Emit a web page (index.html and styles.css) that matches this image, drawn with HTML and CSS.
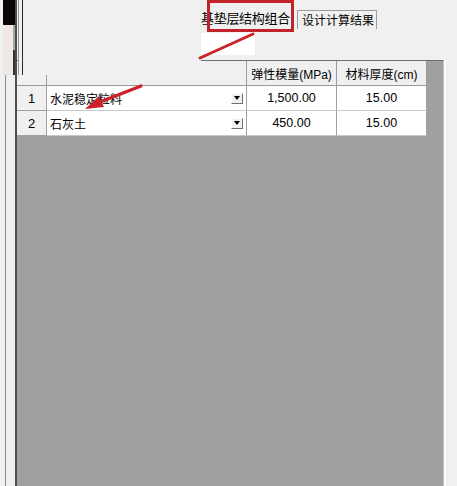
FILE: index.html
```html
<!DOCTYPE html>
<html lang="zh-CN">
<head>
<meta charset="utf-8">
<title>基垫层结构组合</title>
<link rel="stylesheet" href="styles.css">
</head>
<body>
<div class="window">
  <div class="side">
    <div class="side-top">
      <div class="blk blk-dark"></div>
      <div class="blk blk-pink"></div>
      <div class="blk blk-light"></div>
    </div>
    <div class="side-bottom"></div>
  </div>
  <div class="main">
    <div class="top">
      <div class="tabs">
        <div class="tab tab-active">基垫层结构组合</div>
        <div class="tab tab-normal">设计计算结果</div>
      </div>
      <div class="textbox"></div>
    </div>
    <div class="grid-wrap">
      <div class="table">
        <div class="cell head corner"></div>
        <div class="cell head"></div>
        <div class="cell head">弹性模量(MPa)</div>
        <div class="cell head">材料厚度(cm)</div>

        <div class="cell rowhead">1</div>
        <div class="cell name"><span>水泥稳定粒料</span><span class="drop"><i></i></span></div>
        <div class="cell num">1,500.00</div>
        <div class="cell num">15.00</div>

        <div class="cell rowhead">2</div>
        <div class="cell name"><span>石灰土</span><span class="drop"><i></i></span></div>
        <div class="cell num">450.00</div>
        <div class="cell num">15.00</div>
      </div>
    </div>
  </div>
</div>

<div class="panel"></div>
<div class="highlight"></div>
<svg class="arrow" width="457" height="486" viewBox="0 0 457 486">
  <line x1="253" y1="34" x2="200" y2="58" stroke="#cc2229" stroke-width="3" stroke-linecap="round"/>
  <line x1="141" y1="86" x2="100" y2="102" stroke="#cc2229" stroke-width="3.2" stroke-linecap="round"/>
  <polygon points="85,109 104,107 99,96" fill="#cc2229"/>
</svg>
</body>
</html>
```

FILE: styles.css
```css
html, body {
  margin: 0;
  padding: 0;
}
body {
  width: 457px;
  height: 486px;
  overflow: hidden;
  position: relative;
  background: #f0f0f0;
  font-family: "Liberation Sans", "Noto Sans CJK SC", sans-serif;
  font-size: 12px;
  color: #000;
}
.window {
  display: flex;
  height: 486px;
}
.side {
  width: 15px;
  border-right: 2px solid #4e4e4e;
  display: flex;
  flex-direction: column;
}
.side-top {
  height: 75px;
  display: flex;
  flex-direction: column;
}
.blk {
  height: 25px;
  margin-left: 3px;
}
.blk-dark { background: #0a0606; }
.blk-pink { background: #f1e7e3; border-right: 2px solid #a8a8a8; }
.blk-light { background: #ede9e6; border-right: 2px solid #333; }
.side-bottom {
  flex: 1;
  margin-left: 5px;
  border-left: 1px solid #8c8c8c;
}
.main {
  flex: 1;
  display: flex;
  flex-direction: column;
}
.top {
  height: 60px;
  padding-left: 183px;
  box-sizing: border-box;
}
.tabs {
  display: flex;
  align-items: flex-start;
  height: 31px;
}
.tab {
  font-family: "Noto Sans CJK SC", sans-serif;
  white-space: nowrap;
  box-sizing: border-box;
}
.tab-active {
  margin-top: 4px;
  width: 97px;
  height: 27px;
  line-height: 27px;
  font-size: 13px;
  padding-left: 1px;
  letter-spacing: -0.3px;
}
.tab-normal {
  margin-top: 10px;
  width: 80px;
  height: 19px;
  line-height: 17px;
  padding-left: 4px;
  border: 1px solid #9c9c9c;
  border-bottom: none;
  font-size: 12px;
}
.textbox {
  margin-top: 2px;
  width: 55px;
  height: 22px;
  background: #fff;
}
.grid-wrap {
  flex: 1;
  background: #a0a0a0;
  border-top: 1px solid #6e6e6e;
  border-right: 1px solid #c4c4c4;
  margin-right: 13px;
  box-shadow: 2px 0 0 #fbfbfb;
}
.table {
  display: grid;
  grid-template-columns: 30px 200px 90px 90px;
  grid-auto-rows: 25px;
}
.cell {
  box-sizing: border-box;
  border-right: 1px solid #a0a0a0;
  border-bottom: 1px solid #a0a0a0;
  display: flex;
  align-items: center;
  white-space: nowrap;
}
.head {
  background: #f0f0f0;
  justify-content: center;
  border-right-color: #9a9a9a;
  border-bottom-color: #9a9a9a;
}
.rowhead {
  background: #f0f0f0;
  justify-content: center;
  font-size: 13px;
}
.name {
  background: #fff;
  justify-content: space-between;
  padding-left: 3px;
  padding-right: 3px;
  border-bottom-color: #c8c8c8;
  font-family: "Noto Sans CJK SC", sans-serif;
}
.num {
  background: #fff;
  justify-content: center;
  font-size: 12.5px;
  border-bottom-color: #c8c8c8;
}
.drop {
  width: 12px;
  height: 11px;
  box-sizing: border-box;
  background: #f0f0f0;
  border: 1px solid;
  border-color: #fff #6f6f6f #6f6f6f #fff;
  display: flex;
  align-items: center;
  justify-content: center;
}
.drop i {
  width: 0;
  height: 0;
  border-left: 3.5px solid transparent;
  border-right: 3.5px solid transparent;
  border-top: 4px solid #000;
}
.panel {
  position: absolute;
  left: 18px;
  top: 0;
  width: 182px;
  height: 75px;
  background: #f0f0f0;
  border-left: 1px solid #9a9a9a;
}
.panel::before {
  content: "";
  position: absolute;
  left: 3px;
  top: 0;
  width: 1px;
  height: 75px;
  background: #2a2a2a;
}
.highlight {
  position: absolute;
  left: 207px;
  top: 0;
  width: 87px;
  height: 32px;
  box-sizing: border-box;
  border: 3px solid #c0242a;
}
.arrow {
  position: absolute;
  left: 0;
  top: 0;
  pointer-events: none;
}
```
